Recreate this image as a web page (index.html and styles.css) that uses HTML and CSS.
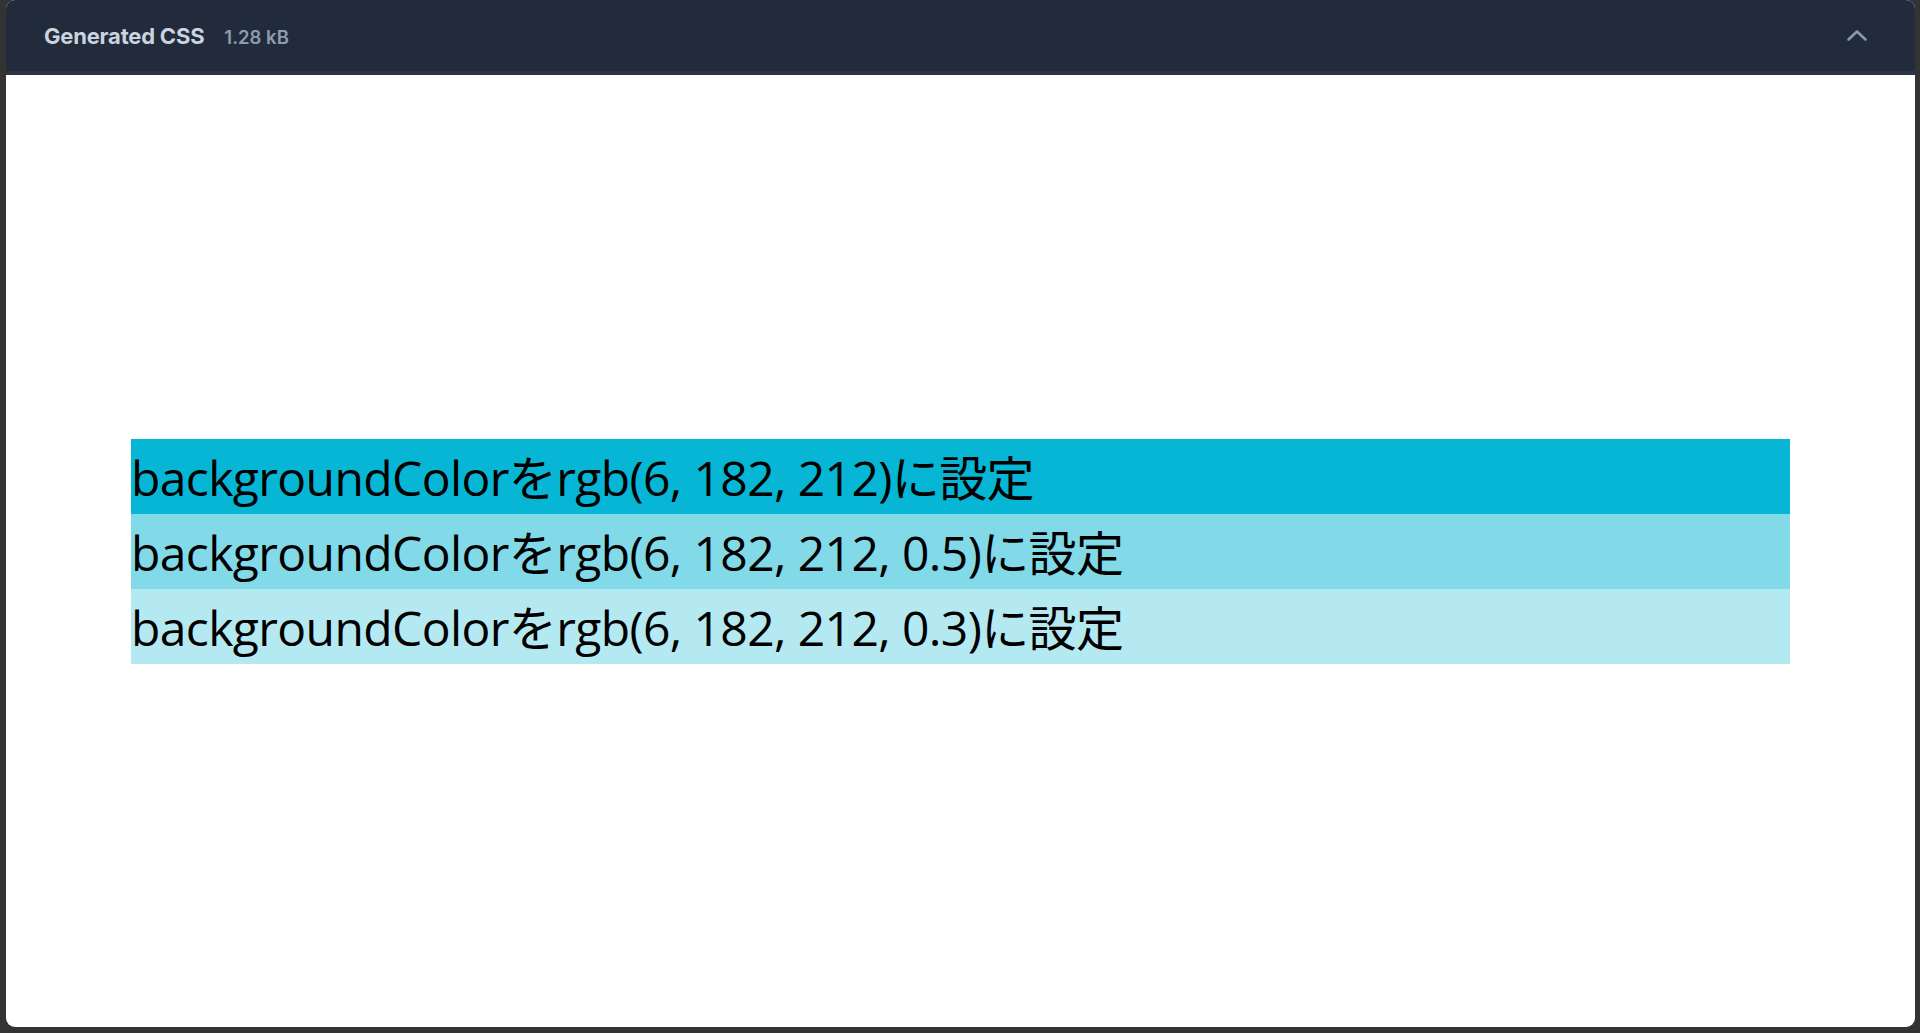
FILE: index.html
```html
<!DOCTYPE html>
<html lang="ja">
<head>
<meta charset="utf-8">
<title>Generated CSS</title>
<link rel="stylesheet" href="styles.css">
</head>
<body>
<div class="frame">
  <div class="panel">
    <header class="panel-header">
      <div class="title-group">
        <span class="title">Generated CSS</span>
        <span class="size">1.28 kB</span>
      </div>
      <svg class="chevron" width="22" height="14" viewBox="0 0 22 14" aria-hidden="true">
        <path d="M2.5 11.5 L11 3.5 L19.5 11.5" fill="none" stroke="currentColor" stroke-width="2.6" stroke-linecap="round" stroke-linejoin="round"/>
      </svg>
    </header>
    <main class="preview">
      <div class="rows">
        <div class="row row-full">backgroundColorをrgb(6, 182, 212)に設定</div>
        <div class="row row-half">backgroundColorをrgb(6, 182, 212, 0.5)に設定</div>
        <div class="row row-third">backgroundColorをrgb(6, 182, 212, 0.3)に設定</div>
      </div>
    </main>
  </div>
</div>
</body>
</html>
```
FILE: styles.css
```css
html, body {
  margin: 0;
  padding: 0;
  height: 100%;
}
body {
  background: #333333;
  overflow: hidden;
}
.frame {
  height: 100%;
  padding: 0 5px 6px 6px;
  box-sizing: border-box;
  display: flex;
}
.panel {
  flex: 1;
  display: flex;
  flex-direction: column;
  background: #ffffff;
  border-radius: 9px;
  overflow: hidden;
}
.panel-header {
  height: 71px;
  flex: none;
  background: #222b3c;
  border-bottom: 4px solid #2b3546;
  display: flex;
  align-items: center;
  justify-content: space-between;
  padding: 0 47px 0 38px;
  font-family: Inter, "Noto Sans", sans-serif;
}
.title-group {
  display: flex;
  align-items: baseline;
  gap: 20px;
  padding-top: 1px;
}
.title {
  font-size: 22px;
  font-weight: 700;
  color: #cbd3df;
  letter-spacing: -0.2px;
}
.size {
  font-size: 18.5px;
  font-weight: 600;
  color: #8f9bb0;
}
.chevron {
  color: #8a98b2;
  margin-top: -1px;
}
.preview {
  flex: 1;
  display: flex;
  align-items: center;
  padding: 0 125px;
}
.rows {
  flex: 1;
  display: flex;
  flex-direction: column;
}
.row {
  height: 75px;
  line-height: 78px;
  font-family: "Open Sans", "Noto Sans CJK JP", sans-serif;
  font-size: 48px;
  color: #000000;
  white-space: nowrap;
  letter-spacing: -0.6px;
}
.row-full {
  background: rgb(6, 182, 212);
}
.row-half {
  background: rgba(6, 182, 212, 0.5);
}
.row-third {
  background: rgba(6, 182, 212, 0.3);
}
```
